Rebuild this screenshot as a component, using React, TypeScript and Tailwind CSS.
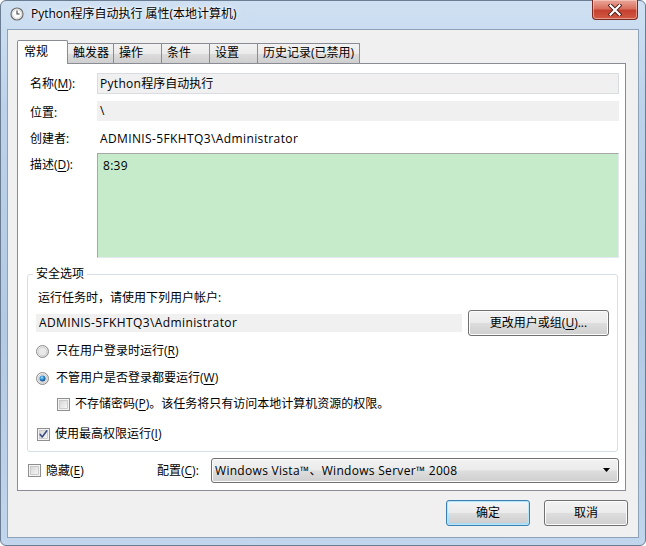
import React from "react";

const FONT = "font-['Open_Sans','Noto_Sans_CJK_SC',sans-serif]";

function Radio({ checked }: { checked?: boolean }) {
  return (
    <svg width="13" height="13" viewBox="0 0 13 13" className="shrink-0">
      <defs>
        <linearGradient id={checked ? "rgo1" : "rgo0"} x1="0" y1="0" x2="1" y2="1">
          <stop offset="0" stopColor="#f7f7f7" />
          <stop offset="1" stopColor="#d8d8d8" />
        </linearGradient>
        <radialGradient id="rdot" cx="0.4" cy="0.35" r="0.7">
          <stop offset="0" stopColor="#a9e4ff" />
          <stop offset="0.45" stopColor="#2f8fd6" />
          <stop offset="1" stopColor="#0d3f7a" />
        </radialGradient>
      </defs>
      <circle cx="6.5" cy="6.5" r="6" fill={`url(#${checked ? "rgo1" : "rgo0"})`} stroke="#8a8a8a" />
      <circle cx="6.5" cy="6.5" r="4.3" fill="#e9e9e9" stroke="#c9c9c9" strokeWidth="0.8" />
      {checked && <circle cx="6.5" cy="6.5" r="3" fill="url(#rdot)" />}
    </svg>
  );
}

function Check({ checked }: { checked?: boolean }) {
  return (
    <svg width="13" height="13" viewBox="0 0 13 13" className="shrink-0">
      <defs>
        <linearGradient id="cbg" x1="0" y1="0" x2="1" y2="1">
          <stop offset="0" stopColor="#d6d6d6" />
          <stop offset="1" stopColor="#f8f8f8" />
        </linearGradient>
      </defs>
      <rect x="0.5" y="0.5" width="12" height="12" fill="#f4f4f4" stroke="#8e8f8f" />
      <rect x="2.5" y="2.5" width="8" height="8" fill="url(#cbg)" stroke="#c4c4c4" strokeWidth="0.8" />
      {checked && (
        <path d="M3.2 6.4 L5.2 9 L9.8 2.8" fill="none" stroke="#3b4f86" strokeWidth="1.6" strokeLinejoin="round" strokeLinecap="round" />
      )}
    </svg>
  );
}

function ClockIcon() {
  return (
    <svg width="14" height="14" viewBox="0 0 14 14">
      <circle cx="7" cy="7" r="6" fill="#f3f3f3" stroke="#707070" strokeWidth="1.2" />
      <circle cx="7" cy="7" r="4.4" fill="#ffffff" stroke="#c8c8c8" strokeWidth="0.6" />
      <path d="M7 3.6 V7 H9.6" fill="none" stroke="#404040" strokeWidth="1.1" />
    </svg>
  );
}

function U({ children }: { children: React.ReactNode }) {
  return <span className="underline underline-offset-2 decoration-[1px]">{children}</span>;
}

const btn =
  "flex items-center justify-center rounded-[3px] border border-[#707070] bg-[linear-gradient(180deg,#f2f2f2_0%,#ebebeb_48%,#dddddd_52%,#cfcfcf_100%)] shadow-[inset_0_0_0_1px_#fcfcfc]";

const tab =
  "h-[21px] -ml-px border border-[#898c95] bg-[linear-gradient(180deg,#f2f2f2_0%,#ebebeb_50%,#dddddd_51%,#cfcfcf_100%)] pl-[5px] pt-[1px]";

export default function App() {
  return (
    <div className={`${FONT} text-[12px] leading-[16px] text-black w-[646px] h-[546px] overflow-hidden`}>
      <div className="w-[646px] h-[546px] rounded-[6px] border border-[#6a7d93] bg-[linear-gradient(180deg,#cfe0f2_0%,#bcd2ea_20%,#b3cae4_60%,#c1d5ec_100%)] flex flex-col px-[6px] pb-[7px]">
        {/* Title bar */}
        <div className="h-[28px] flex items-start relative">
          <div className="flex items-center h-[26px] pl-[3px] gap-[7px]">
            <ClockIcon />
            <span className="text-[12px] text-black [text-shadow:0_0_6px_#ffffff,0_0_3px_#ffffff]">
              Python程序自动执行 属性(本地计算机)
            </span>
          </div>
          <div className="absolute right-[1px] top-[-1px] w-[46px] h-[20px] rounded-b-[4px] border border-t-0 border-[#7a2a20] bg-[linear-gradient(180deg,#eaa89b_0%,#d9705e_45%,#c5412f_55%,#d15a45_100%)] shadow-[inset_0_0_0_1px_rgba(255,220,210,0.5)] flex items-center justify-center">
            <svg width="14" height="12" viewBox="0 0 14 12">
              <path d="M2.5 1.5 L11.5 10.5 M11.5 1.5 L2.5 10.5" stroke="#4a1a14" strokeWidth="4" strokeLinecap="square" />
              <path d="M2.5 1.5 L11.5 10.5 M11.5 1.5 L2.5 10.5" stroke="#ffffff" strokeWidth="2.2" strokeLinecap="square" />
            </svg>
          </div>
        </div>

        {/* Client area */}
        <div className="w-[632px] h-[509px] border border-[#8da2b8] bg-[#f0f0f0] flex flex-col pt-[10px] pl-[9px]">
          {/* Tabs */}
          <div className="flex items-end h-[24px] relative z-10">
            <div className="h-[24px] w-[51px] bg-white border border-b-0 border-[#898c95] rounded-t-[2px] pl-[6px] pt-[3px]">常规</div>
            <div className={`${tab} w-[47px]`}>触发器</div>
            <div className={`${tab} w-[49px]`}>操作</div>
            <div className={`${tab} w-[49px]`}>条件</div>
            <div className={`${tab} w-[49px]`}>设置</div>
            <div className={`${tab} w-[103px]`}>历史记录(已禁用)</div>
          </div>

          {/* Panel */}
          <div className="w-[609px] h-[428px] -mt-px border border-[#898c95] bg-white flex flex-col">
            {/* Name */}
            <div className="mt-[9px] flex items-center h-[21px]">
              <div className="w-[79px] shrink-0 pl-[12px] pt-[1px]">名称(<U>M</U>):</div>
              <div className="w-[522px] h-[21px] bg-[#f0f0f0] border border-[#d9dde2] flex items-center pl-[2px]">
                <span className="tracking-[0.3px]">Python</span>程序自动执行
              </div>
            </div>
            {/* Location */}
            <div className="mt-[7px] flex items-center h-[20px]">
              <div className="w-[79px] shrink-0 pl-[12px] pt-[3px]">位置:</div>
              <div className="w-[522px] h-[20px] bg-[#f0f0f0] flex items-center pl-[3px]">\</div>
            </div>
            {/* Author */}
            <div className="mt-[7px] flex items-center h-[20px]">
              <div className="w-[79px] shrink-0 pl-[12px] pt-[1px]">创建者:</div>
              <div className="pl-[3px] tracking-[0.38px] pt-[1px]">ADMINIS-5FKHTQ3\Administrator</div>
            </div>
            {/* Description */}
            <div className="mt-[5px] flex items-start h-[105px]">
              <div className="w-[79px] shrink-0 pl-[12px] pt-[4px]">描述(<U>D</U>):</div>
              <div className="w-[522px] h-[105px] bg-[#c6ebca] border border-[#a7a7a7] border-r-[#e3e9ef] border-b-[#e3e9ef] pl-[5px] pt-[4px] tracking-[0.3px]">8:39</div>
            </div>

            {/* Security group */}
            <div className="mt-[16px] ml-[9px] w-[591px] h-[178px] border border-[#d5dfe5] rounded-[3px] relative flex flex-col">
              <div className="absolute left-[5px] top-[-9px] bg-white px-[3px]">安全选项</div>
              <div className="mt-[13px] h-[20px] flex items-center pl-[10px]">运行任务时，请使用下列用户帐户:</div>
              <div className="mt-[2px] h-[26px] flex items-center pl-[8px]">
                <div className="w-[426px] h-[18px] bg-[#f0f0f0] flex items-center pl-[3px] tracking-[0.38px]">ADMINIS-5FKHTQ3\Administrator</div>
                <div className={`${btn} ml-[6px] w-[141px] h-[26px]`}>更改用户或组(<U>U</U>)...</div>
              </div>
              <div className="mt-[5px] h-[20px] flex items-center pl-[8px] gap-[7px]">
                <Radio />
                <span>只在用户登录时运行(<U>R</U>)</span>
              </div>
              <div className="mt-[7px] h-[20px] flex items-center pl-[8px] gap-[7px]">
                <Radio checked />
                <span>不管用户是否登录都要运行(<U>W</U>)</span>
              </div>
              <div className="mt-[6px] h-[20px] flex items-center pl-[29px] gap-[5px]">
                <Check />
                <span>不存储密码(<U>P</U>)。该任务将只有访问本地计算机资源的权限。</span>
              </div>
              <div className="mt-[10px] h-[20px] flex items-center pl-[9px] gap-[5px]">
                <Check checked />
                <span>使用最高权限运行(<U>I</U>)</span>
              </div>
            </div>

            {/* Bottom row */}
            <div className="mt-[6px] h-[25px] flex items-center">
              <div className="pl-[10px] flex items-center gap-[5px] w-[139px] shrink-0">
                <Check />
                <span>隐藏(<U>E</U>)</span>
              </div>
              <div className="w-[54px] shrink-0">配置(<U>C</U>):</div>
              <div className={`${btn} w-[408px] h-[25px] !justify-between pl-[3px] pr-[7px]`}>
                <span className="tracking-[0.3px]">Windows Vista™、Windows Server™ 2008</span>
                <svg width="8" height="5" viewBox="0 0 8 5">
                  <path d="M0 0 H7 L3.5 4 Z" fill="#000" />
                </svg>
              </div>
            </div>
          </div>

          {/* Dialog buttons */}
          <div className="mt-[9px] flex justify-end gap-[14px] pr-[10px]">
            <div className="w-[84px] h-[26px] flex items-center justify-center rounded-[3px] border border-[#3c7fb1] bg-[linear-gradient(180deg,#eaf6fd_0%,#d9f0fc_48%,#bee6fd_52%,#a7d9f5_100%)] shadow-[inset_0_0_0_1px_#b8e4f8]">
              <span className="rounded-[2px] bg-[linear-gradient(180deg,#f2f2f2_0%,#ebebeb_48%,#dddddd_52%,#cfcfcf_100%)] w-[78px] h-[20px] flex items-center justify-center">确定</span>
            </div>
            <div className={`${btn} w-[84px] h-[26px]`}>取消</div>
          </div>
        </div>
      </div>
    </div>
  );
}
